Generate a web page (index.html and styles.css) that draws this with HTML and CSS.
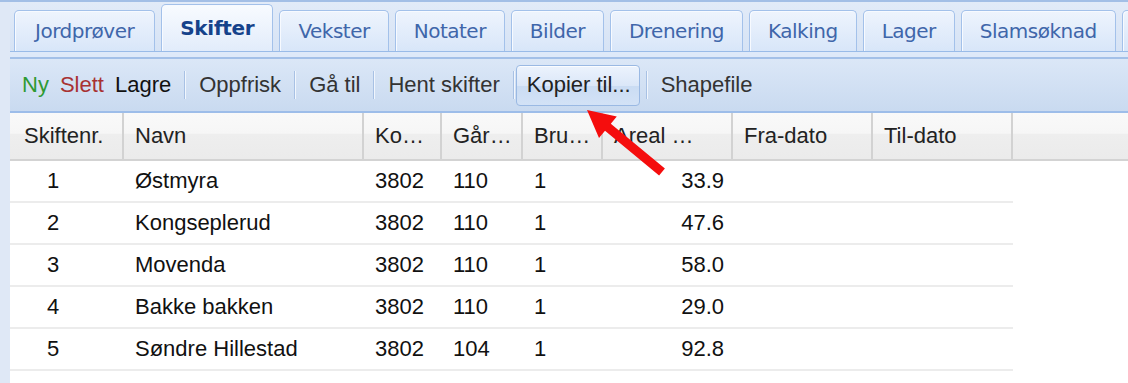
FILE: index.html
```html
<!DOCTYPE html>
<html lang="no">
<head>
  <meta charset="UTF-8" />
  <meta name="viewport" content="width=device-width, initial-scale=1.0"/>
  <title>Skifter</title>
  <link rel="stylesheet" href="styles.css">
</head>
<body>
  <div class="panel">
    <div class="tabbar">
      <div class="tab">Jordprøver</div>
      <div class="tab active">Skifter</div>
      <div class="tab">Vekster</div>
      <div class="tab">Notater</div>
      <div class="tab">Bilder</div>
      <div class="tab">Drenering</div>
      <div class="tab">Kalking</div>
      <div class="tab">Lager</div>
      <div class="tab">Slamsøknad</div>
      <div class="tab"></div>
    </div>
    <div class="tab-spacer"></div>

    <div class="toolbar">
      <div class="tb-group">
        <button class="tb-link new">Ny</button>
        <button class="tb-link delete">Slett</button>
        <button class="tb-link">Lagre</button>
      </div>
      <span class="tb-sep"></span>
      <button class="tb-btn">Oppfrisk</button>
      <span class="tb-sep"></span>
      <button class="tb-btn">Gå til</button>
      <span class="tb-sep"></span>
      <button class="tb-btn">Hent skifter</button>
      <span class="tb-sep"></span>
      <button class="tb-btn pressed">Kopier til...</button>
      <span class="tb-sep"></span>
      <button class="tb-btn">Shapefile</button>
    </div>

    <div class="grid-head">
      <div class="hcell c-nr">Skiftenr.</div>
      <div class="hcell c-name">Navn</div>
      <div class="hcell c-komm">Ko…</div>
      <div class="hcell c-gnr">Går…</div>
      <div class="hcell c-bnr">Bru…</div>
      <div class="hcell c-areal">Areal …</div>
      <div class="hcell c-date">Fra-dato</div>
      <div class="hcell c-date">Til-dato</div>
      <div class="hcell filler"></div>
    </div>

    <div class="grid-body">
      <div class="grid-row">
        <div class="cell c-nr num">1</div>
        <div class="cell c-name">Østmyra</div>
        <div class="cell c-komm">3802</div>
        <div class="cell c-gnr">110</div>
        <div class="cell c-bnr">1</div>
        <div class="cell c-areal right">33.9</div>
        <div class="cell c-date"></div>
        <div class="cell c-date"></div>
      </div>
      <div class="grid-row">
        <div class="cell c-nr num">2</div>
        <div class="cell c-name">Kongseplerud</div>
        <div class="cell c-komm">3802</div>
        <div class="cell c-gnr">110</div>
        <div class="cell c-bnr">1</div>
        <div class="cell c-areal right">47.6</div>
        <div class="cell c-date"></div>
        <div class="cell c-date"></div>
      </div>
      <div class="grid-row">
        <div class="cell c-nr num">3</div>
        <div class="cell c-name">Movenda</div>
        <div class="cell c-komm">3802</div>
        <div class="cell c-gnr">110</div>
        <div class="cell c-bnr">1</div>
        <div class="cell c-areal right">58.0</div>
        <div class="cell c-date"></div>
        <div class="cell c-date"></div>
      </div>
      <div class="grid-row">
        <div class="cell c-nr num">4</div>
        <div class="cell c-name">Bakke bakken</div>
        <div class="cell c-komm">3802</div>
        <div class="cell c-gnr">110</div>
        <div class="cell c-bnr">1</div>
        <div class="cell c-areal right">29.0</div>
        <div class="cell c-date"></div>
        <div class="cell c-date"></div>
      </div>
      <div class="grid-row">
        <div class="cell c-nr num">5</div>
        <div class="cell c-name">Søndre Hillestad</div>
        <div class="cell c-komm">3802</div>
        <div class="cell c-gnr">104</div>
        <div class="cell c-bnr">1</div>
        <div class="cell c-areal right">92.8</div>
        <div class="cell c-date"></div>
        <div class="cell c-date"></div>
      </div>
    </div>
  </div>

  <!-- red pointer arrow -->
  <svg class="pointer" width="1128" height="383" viewBox="0 0 1128 383">
    <polygon fill="#f50d0d" points="587,110 616.8,116.5 610.8,123.8 664.9,168.5 659.1,175.5 605,130.8 599,138.1"/>
  </svg>
</body>
</html>
```

FILE: styles.css
```css
body {
  margin: 0;
  background: #dfe8f6;
  border-top: 2px solid #a3bfe6;
  font-family: "Liberation Sans", Arial, sans-serif;
  overflow: hidden;
}

.panel {
  margin-left: 10px;
  height: calc(100vh - 2px);
  background: #fff;
}

/* Tabs */
.tabbar {
  height: 49px;
  display: flex;
  align-items: flex-end;
  gap: 6px;
  padding-left: 4px;
  overflow: hidden;
  background: linear-gradient(#e2ebf8, #d6e3f5);
  border-bottom: 1px solid #99bbe8;
}

.tab {
  flex-shrink: 0;
  height: 40px;
  display: flex;
  align-items: center;
  padding: 0 18px;
  border: 1px solid #a3c1ea;
  border-bottom: none;
  border-radius: 5px 5px 0 0;
  background: linear-gradient(#eef4fd, #d8e6f9);
  box-shadow: inset 1px 1px 0 #f7faff;
  font-family: "DejaVu Sans", Verdana, sans-serif;
  font-size: 20px;
  letter-spacing: -0.5px;
  color: #3f66aa;
}

.tab:first-child {
  padding: 0 20px;
}

.tab.active {
  position: relative;
  z-index: 1;
  height: 46px;
  margin-bottom: -6px;
  padding-bottom: 6px;
  box-sizing: content-box;
  background: linear-gradient(#f8fbff, #dfeafa);
  color: #15428b;
  font-weight: bold;
  letter-spacing: -0.3px;
}

.tab-spacer {
  height: 5px;
  background: #dee9f9;
}

/* Toolbar */
.toolbar {
  height: 52px;
  display: flex;
  align-items: center;
  border-top: 2px solid #a3c0e8;
  border-bottom: 2px solid #9dbde9;
  background: linear-gradient(#dbe7f7, #c9daf0);
  font-size: 22px;
}

.toolbar button {
  font-family: inherit;
  font-size: 22px;
  background: none;
  border: none;
  cursor: pointer;
  padding: 0;
}

.tb-group {
  display: flex;
  gap: 11px;
  padding: 0 12px;
}

.tb-link {
  color: #111;
}

.tb-link.new {
  color: #2f9a32;
}

.tb-link.delete {
  color: #a83232;
}

.toolbar .tb-btn {
  height: 41px;
  padding: 0 11px;
  border: 1px solid transparent;
  border-radius: 4px;
  color: #333;
}

.toolbar .tb-btn.pressed {
  padding: 0 8px 0 10px;
  margin-right: 5px;
  border-color: #9ab9e3;
  background: linear-gradient(#ecf3fd, #dbe7f8 50%, #cadcf3 52%, #d3e2f6);
  box-shadow: inset 0 1px 0 #fafcff;
  color: #222;
}

.tb-sep {
  width: 1px;
  height: 28px;
  margin: 0 1px;
  border-left: 1px solid #a8c1e4;
  background: #f1f6fd;
}

/* Grid */
.grid-head {
  display: flex;
  height: 46px;
  border-bottom: 2px solid #d3d3d3;
  background: linear-gradient(#f9f9f9, #f6f6f6 44%, #eeeeee 46%, #ebebeb);
}

.hcell {
  box-sizing: border-box;
  flex-shrink: 0;
  display: flex;
  align-items: center;
  padding-left: 11px;
  border-right: 2px solid #d2d2d2;
  font-size: 22px;
  color: #222;
  white-space: nowrap;
  overflow: hidden;
}

.hcell.c-nr {
  padding-left: 14px;
}

.hcell.filler {
  flex: 1;
  border-right: none;
}

.grid-row {
  display: flex;
  width: 1003px;
  height: 40px;
  border-bottom: 2px solid #ececec;
}

.cell {
  box-sizing: border-box;
  flex-shrink: 0;
  display: flex;
  align-items: center;
  padding-left: 11px;
  font-size: 22px;
  color: #111;
  white-space: nowrap;
}

.cell.num {
  padding-left: 37px;
}

.cell.right {
  justify-content: flex-end;
  padding-right: 9px;
}

.c-nr { width: 114px; }
.c-name { width: 240px; }
.c-komm { width: 78px; }
.c-gnr { width: 81px; }
.c-bnr { width: 80px; }
.c-areal { width: 130px; }
.c-date { width: 140px; }

.pointer {
  position: absolute;
  top: 0;
  left: 0;
  pointer-events: none;
}
```
